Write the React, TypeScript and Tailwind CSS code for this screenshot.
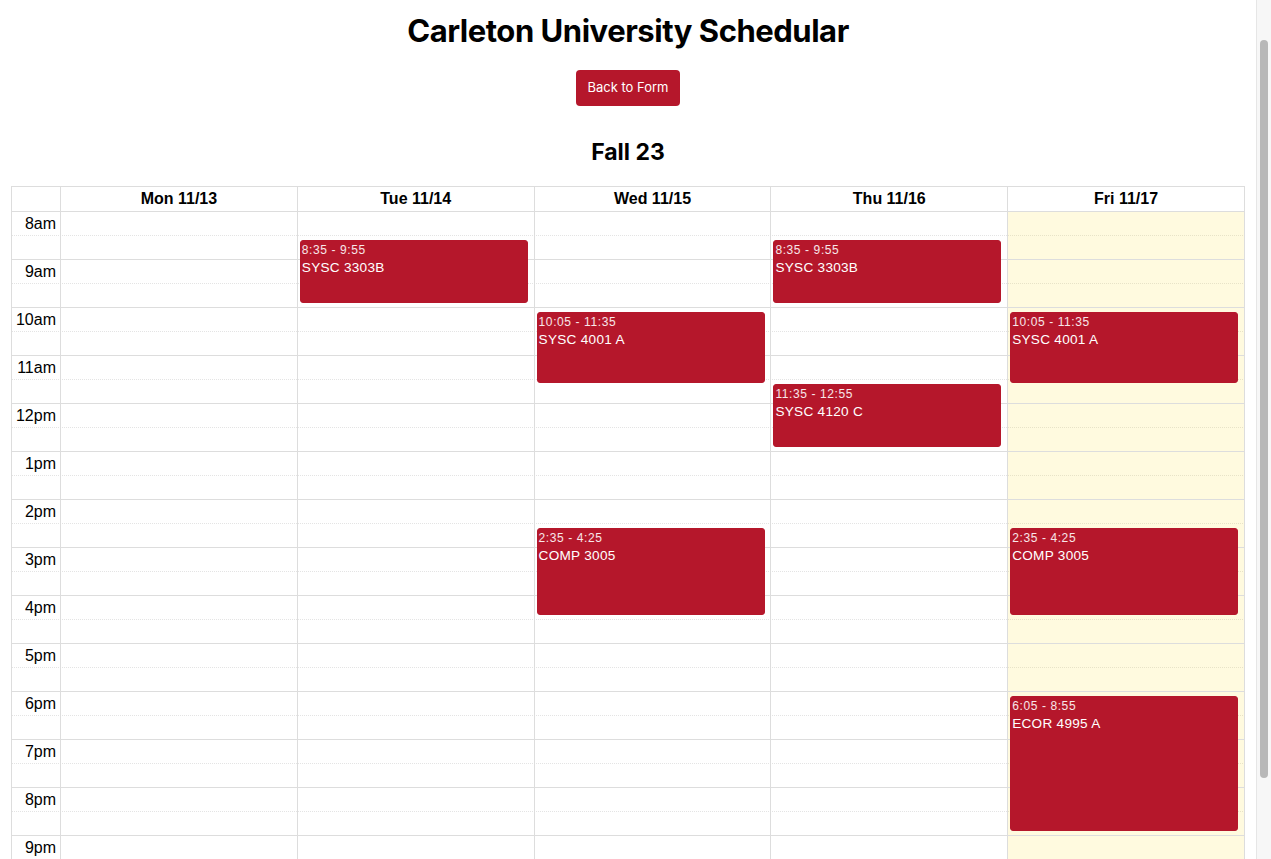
import React from "react";

const days = [
  { label: "Mon 11/13", today: false },
  { label: "Tue 11/14", today: false },
  { label: "Wed 11/15", today: false },
  { label: "Thu 11/16", today: false },
  { label: "Fri 11/17", today: true },
];

const hours = [
  "8am", "9am", "10am", "11am", "12pm", "1pm", "2pm", "3pm",
  "4pm", "5pm", "6pm", "7pm", "8pm", "9pm", "10pm", "11pm",
];

type CalEvent = { day: number; start: number; end: number; time: string; title: string };

const events: CalEvent[] = [
  { day: 1, start: 8 + 35 / 60, end: 9 + 55 / 60, time: "8:35 - 9:55", title: "SYSC 3303B" },
  { day: 3, start: 8 + 35 / 60, end: 9 + 55 / 60, time: "8:35 - 9:55", title: "SYSC 3303B" },
  { day: 2, start: 10 + 5 / 60, end: 11 + 35 / 60, time: "10:05 - 11:35", title: "SYSC 4001 A" },
  { day: 4, start: 10 + 5 / 60, end: 11 + 35 / 60, time: "10:05 - 11:35", title: "SYSC 4001 A" },
  { day: 3, start: 11 + 35 / 60, end: 12 + 55 / 60, time: "11:35 - 12:55", title: "SYSC 4120 C" },
  { day: 2, start: 14 + 35 / 60, end: 16 + 25 / 60, time: "2:35 - 4:25", title: "COMP 3005" },
  { day: 4, start: 14 + 35 / 60, end: 16 + 25 / 60, time: "2:35 - 4:25", title: "COMP 3005" },
  { day: 4, start: 18 + 5 / 60, end: 20 + 55 / 60, time: "6:05 - 8:55", title: "ECOR 4995 A" },
];

const HOUR_PX = 48;
const START_HOUR = 8;

function SlotRow({ label, half }: { label?: string; half: boolean }) {
  return (
    <div
      className={
        "grid grid-cols-[49px_repeat(5,minmax(0,1fr))] h-[24px] border-b " +
        (half ? "border-dotted border-[#e4e4e4]" : "border-solid border-[#ddd]")
      }
    >
      <div className="border-r border-[#ddd] flex items-center justify-end pr-1 text-[16px] text-black">
        {label}
      </div>
      {days.map((d) => (
        <div
          key={d.label}
          className={
            "border-r border-[#ddd] " + (d.today ? "bg-[rgba(255,220,40,0.15)]" : "")
          }
        />
      ))}
    </div>
  );
}

function EventBlock({ ev }: { ev: CalEvent }) {
  const top = (ev.start - START_HOUR) * HOUR_PX;
  const height = (ev.end - ev.start) * HOUR_PX - 1;
  return (
    <div
      className="absolute left-[2px] right-[2.5%] rounded-[3px] bg-[#b5172b] border border-[#b5172b] px-px pt-[2px] text-white overflow-hidden"
      style={{ top, height }}
    >
      <div className="text-[12px] leading-[14px] tracking-[0.05em] mb-[2px] whitespace-nowrap text-white/90">
        {ev.time}
      </div>
      <div className="text-[13.6px] leading-[17px] tracking-[0.02em] whitespace-nowrap">{ev.title}</div>
    </div>
  );
}

function Calendar() {
  return (
    <div className="mx-[11px] border-t border-l border-[#ddd] font-['Liberation_Sans',Arial,sans-serif] text-black">
      <div className="grid grid-cols-[49px_repeat(5,minmax(0,1fr))] h-[25px] border-b border-[#ddd]">
        <div className="border-r border-[#ddd]" />
        {days.map((d) => (
          <div
            key={d.label}
            className="border-r border-[#ddd] flex items-center justify-center text-[16px] font-bold"
          >
            {d.label}
          </div>
        ))}
      </div>
      <div className="relative">
        {hours.map((h) => (
          <React.Fragment key={h}>
            <SlotRow label={h} half />
            <SlotRow half={false} />
          </React.Fragment>
        ))}
        <div className="absolute inset-0 grid grid-cols-[49px_repeat(5,minmax(0,1fr))] pointer-events-none">
          <div />
          {days.map((d, i) => (
            <div key={d.label} className="relative pr-px">
              <div className="relative h-full">
                {events
                  .filter((e) => e.day === i)
                  .map((e, j) => (
                    <EventBlock key={j} ev={e} />
                  ))}
              </div>
            </div>
          ))}
        </div>
      </div>
    </div>
  );
}

export default function App() {
  return (
    <div className="flex h-screen overflow-hidden bg-white">
      <div className="flex-1 min-w-0 overflow-hidden font-['Inter','Noto_Sans',sans-serif]">
        <h1 className="pt-[12px] text-center text-[31px] leading-[38px] tracking-[-0.015em] font-bold text-black">
          Carleton University Schedular
        </h1>
        <div className="mt-[20px] flex justify-center">
          <button className="h-[36px] px-[11px] rounded-[4px] bg-[#b5172b] text-white text-[13px]">
            Back to Form
          </button>
        </div>
        <h2 className="mt-[30px] text-center text-[23px] leading-[32px] font-bold text-black">
          Fall 23
        </h2>
        <div className="mt-[18px]">
          <Calendar />
        </div>
      </div>
      {/* window scrollbar from the screenshot */}
      <div className="w-[15px] shrink-0 border-l border-[#e6e6e6] bg-[#f7f7f7] pt-[40px] pl-[3px]">
        <div className="h-[738px] w-[8px] rounded-full bg-[#b8b8b8]" />
      </div>
    </div>
  );
}
